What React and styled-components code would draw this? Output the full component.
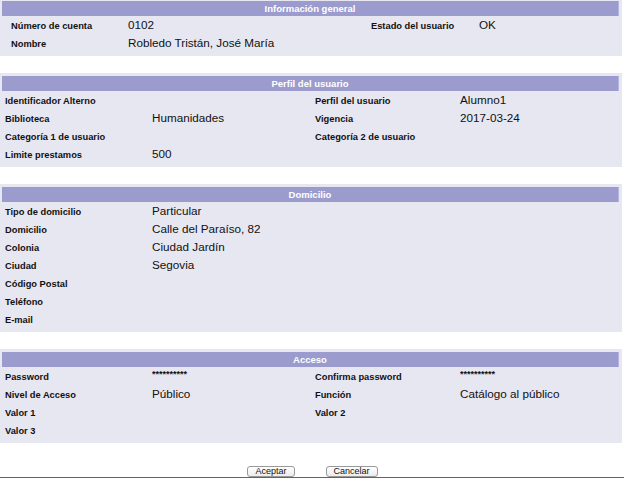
import styled, { createGlobalStyle } from 'styled-components';

const GlobalStyle = createGlobalStyle`
  html, body {
    margin: 0;
    padding: 0;
    background: #ffffff;
  }
  body {
    font-family: "Liberation Sans", Arial, sans-serif;
    color: #000;
    overflow: hidden;
  }
`;

const secciones = [
  {
    titulo: 'Información general',
    general: true,
    filas: [
      ['Número de cuenta', '0102', 'Estado del usuario', 'OK'],
      ['Nombre', 'Robledo Tristán, José María', '', '']
    ]
  },
  {
    titulo: 'Perfil del usuario',
    filas: [
      ['Identificador Alterno', '', 'Perfil del usuario', 'Alumno1'],
      ['Biblioteca', 'Humanidades', 'Vigencia', '2017-03-24'],
      ['Categoría 1 de usuario', '', 'Categoría 2 de usuario', ''],
      ['Limite prestamos', '500', '', '']
    ]
  },
  {
    titulo: 'Domicilio',
    filas: [
      ['Tipo de domicilio', 'Particular', '', ''],
      ['Domicilio', 'Calle del Paraíso, 82', '', ''],
      ['Colonia', 'Ciudad Jardín', '', ''],
      ['Ciudad', 'Segovia', '', ''],
      ['Código Postal', '', '', ''],
      ['Teléfono', '', '', ''],
      ['E-mail', '', '', '']
    ]
  },
  {
    titulo: 'Acceso',
    filas: [
      ['Password', '**********', 'Confirma password', '**********'],
      ['Nivel de Acceso', 'Público', 'Función', 'Catálogo al público'],
      ['Valor 1', '', 'Valor 2', ''],
      ['Valor 3', '', '', '']
    ]
  }
];

const App = () => {
  return (
    <>
      <GlobalStyle />
      <S_Page>
        {secciones.map((s) => (
          <S_Panel key={s.titulo}>
            <S_PanelHeader>{s.titulo}</S_PanelHeader>
            <S_Grid $general={s.general}>
              {s.filas.map((fila, i) =>
                fila.map((texto, j) =>
                  j % 2 === 0 ? (
                    <S_Label key={`${i}-${j}`}>{texto}</S_Label>
                  ) : (
                    <S_Value key={`${i}-${j}`} $stars={texto.startsWith('*')}>
                      {texto}
                    </S_Value>
                  )
                )
              )}
            </S_Grid>
          </S_Panel>
        ))}
        <S_Actions>
          <S_Button type="button">Aceptar</S_Button>
          <S_Button type="button">Cancelar</S_Button>
        </S_Actions>
        <S_Footer />
      </S_Page>
    </>
  );
};

export default App;

const S_Page = styled.div`
  width: 624px;
  height: 480px;
  display: flex;
  flex-direction: column;
  margin-top: -2px;
`;

const S_Panel = styled.section`
  width: 622px;
  box-sizing: border-box;
  padding: 3px 3px 4px 2px;
  background-color: #e7e7f1;
  margin-bottom: 17px;
`;

const S_PanelHeader = styled.div`
  height: 15px;
  line-height: 15px;
  background-color: #9b9bcd;
  border-right: 1px solid #b4b4dc;
  color: #ffffff;
  font-weight: bold;
  font-size: 9.5px;
  text-align: center;
`;

const S_Grid = styled.div`
  display: grid;
  grid-template-columns: ${(p) => (p.$general ? '117px 243px 108px 1fr' : '147px 163px 145px 1fr')};
  grid-auto-rows: 18px;
  align-items: center;
  padding-left: ${(p) => (p.$general ? '9px' : '3px')};
`;

const S_Label = styled.div`
  font-weight: bold;
  font-size: 9.3px;
  padding-top: 2px;
  color: #111;
  white-space: nowrap;
`;

const S_Value = styled.div`
  font-size: ${(p) => (p.$stars ? '9px' : '11.7px')};
  font-weight: ${(p) => (p.$stars ? 'bold' : 'normal')};
  align-self: ${(p) => (p.$stars ? 'start' : 'center')};
  padding-top: ${(p) => (p.$stars ? '2px' : '0')};
  padding-bottom: ${(p) => (p.$stars ? '0' : '2px')};
  color: #111;
  white-space: nowrap;
`;

const S_Actions = styled.div`
  display: flex;
  justify-content: center;
  gap: 31px;
  margin-top: 6px;
  padding-left: 1px;
`;

const S_Button = styled.button`
  height: 11px;
  padding: 0 7px;
  border: 1px solid #9a9a9a;
  border-radius: 3px;
  background: linear-gradient(#ffffff, #ececec);
  font-family: "Liberation Sans", Arial, sans-serif;
  font-size: 9px;
  line-height: 9px;
  color: #111;
  cursor: pointer;
`;

const S_Footer = styled.div`
  margin-top: auto;
  height: 2px;
  background-color: #5b5f8c;
`;
